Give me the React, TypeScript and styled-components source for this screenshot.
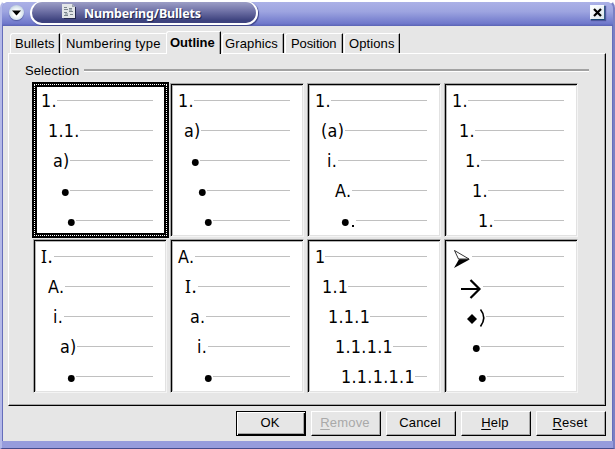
import React from "react";
import styled, { createGlobalStyle } from "styled-components";

const Global = createGlobalStyle`
  * { box-sizing: border-box; }
  body { margin: 0; background: #fff; overflow: hidden; }
`;

const Window = styled.div`
  width: 615px;
  height: 449px;
  display: flex;
  flex-direction: column;
  border-left: 2px solid #b4b9e8;
  border-right: 2px solid #7a80c4;
  border-bottom: 1px solid #454b8c;
  border-radius: 8px 8px 0 0;
  border-top: 2px solid #fff;
  background: #969cdc;
  font-family: "Liberation Sans", Arial, sans-serif;
  font-size: 13px;
  color: #000;
`;

const TitleBar = styled.header`
  height: 24px;
  flex: none;
  display: flex;
  align-items: flex-start;
  background: linear-gradient(#abb1e7, #9da4e0 40%, #6f78cb 90%, #5a63b4);
  border-radius: 7px 7px 0 0;
  padding: 0 8px 0 7px;
`;

const MenuButton = styled.button`
  width: 15px;
  height: 15px;
  margin: 3px 7px 0 0;
  padding: 0;
  border: 0;
  border-radius: 50%;
  background: radial-gradient(circle at 50% 55%, #fff 25%, #d5e2ec 60%, #8ea1c4);
  box-shadow: 0 1px 1px #515aa0;
  svg { display: block; }
`;

const TitlePill = styled.div`
  width: 228px;
  height: 24px;
  margin: -1px 0 0 -1px;
  display: flex;
  align-items: flex-start;
  gap: 7px;
  padding: 2px 0 0 29px;
  border: 2px solid #fff;
  border-top-width: 1px;
  border-radius: 12px;
  background: linear-gradient(#9c9ec6, #7375a9 40%, #3d427e 88%);
  box-shadow: 1px 1px 1px #3b4284;
  svg { flex: none; }
`;

const Title = styled.h1`
  margin: 0;
  color: #fff;
  font: bold 12.5px/20px "Noto Sans", "DejaVu Sans", sans-serif;
  letter-spacing: -0.15px;
  white-space: nowrap;
  text-shadow: 1px 1px 0 #22264e;
`;

const CloseButton = styled.button`
  width: 15px;
  height: 15px;
  margin: 3px 0 0 auto;
  padding: 0;
  border: 1px solid #f5faff;
  border-right-color: #335c85;
  border-bottom-color: #174774;
  background: linear-gradient(135deg, #fff, #dbe6ec);
  box-shadow: 1px 1px 1px #4c559c;
  svg { display: block; }
`;

const Body = styled.main`
  flex: none;
  height: 415px;
  margin: 0;
  padding: 5px 5px 0 5px;
  background: #e6e6e6;
  border-left: 1px solid #656dbb;
  border-right: 1px solid #656dbb;
`;

const Tabs = styled.nav`
  display: flex;
  align-items: flex-end;
  height: 22px;
  padding-left: 2px;
`;

const Tab = styled.div<{ $w: number; $gap?: number; $pad: number; $active?: boolean; $covered?: boolean; $track: number }>`
  width: ${p => p.$w}px;
  height: ${p => (p.$active ? 23 : 20)}px;
  margin-right: ${p => p.$gap ?? 0}px;
  margin-bottom: ${p => (p.$active ? -1 : 0)}px;
  padding-left: ${p => p.$pad}px;
  position: relative;
  z-index: ${p => (p.$active ? 1 : 0)};
  background: #e6e6e6;
  border-left: 1px solid #fff;
  border-top: 1px solid #fff;
  border-right: ${p => (p.$covered ? "0" : "1px solid #000")};
  box-shadow: ${p => (p.$covered ? "none" : "inset -1px 0 #a6a6a6")};
  border-radius: 3px 1px 0 0;
  font-weight: ${p => (p.$active ? "bold" : "normal")};
  line-height: ${p => (p.$active ? 22 : 20)}px;
  letter-spacing: ${p => p.$track}px;
  white-space: nowrap;
`;

const Pane = styled.section`
  width: 598px;
  height: 353px;
  padding: 8px 16px 0 16px;
  border: 1px solid #fff;
  border-right-color: #000;
  border-bottom-color: #000;
  box-shadow: inset -1px -1px #a6a6a6;
`;

const Legend = styled.div`
  display: flex;
  align-items: center;
  gap: 5px;
  height: 16px;
  line-height: 15px;
  letter-spacing: 0.1px;
  &::after {
    content: "";
    flex: 1;
    height: 2px;
    background: #a2a2a2;
    border-bottom: 1px solid #fff;
  }
`;

const Grid = styled.div`
  display: grid;
  grid-template-columns: repeat(4, 134px);
  grid-auto-rows: 154px;
  gap: 2px 3px;
  margin: 5px 0 0 8px;
`;

const Cell = styled.div<{ $selected?: boolean }>`
  position: relative;
  background: #fff;
  padding: 3px 14px 0 0;
  border: 1px solid #a6a6a6;
  border-right-color: #f4f4f4;
  border-bottom-color: #f4f4f4;
  box-shadow: inset 1px 1px #000, inset -1px -1px #e2e2e2, inset 2px 2px #b4b4b4;
  ${p => p.$selected && `
    &::before {
      content: "";
      position: absolute;
      inset: -2px -3px -2px -2px;
      border: 5px solid #000;
    }
    &::after {
      content: "";
      position: absolute;
      inset: 0 -1px 0 0;
      border: 1px dotted #fff;
    }
  `}
`;

const Level = styled.div<{ $x: number; $end: number }>`
  height: 30px;
  padding-left: ${p => p.$x - 1}px;
  display: grid;
  grid-template-columns: ${p => p.$end - p.$x}px 1fr;
  &::after {
    content: "";
    height: 1px;
    margin-top: 13px;
    margin-right: -1px;
    background: #c0c0c0;
  }
`;

const Marker = styled.span<{ $serif?: boolean }>`
  font-family: ${p => (p.$serif ? '"Noto Sans"' : '"DejaVu Sans Condensed", "DejaVu Sans"')}, sans-serif;
  font-stretch: ${p => (p.$serif ? "normal" : "condensed")};
  font-size: ${p => (p.$serif ? 17.5 : 17.8)}px;
  line-height: ${p => (p.$serif ? 27 : 28)}px;
  height: 28px;
  letter-spacing: ${p => (p.$serif ? 0.7 : 0.3)}px;
  white-space: nowrap;
`;

const Symbol = styled.svg`
  display: block;
  overflow: visible;
`;

const Footer = styled.footer`
  display: flex;
  justify-content: flex-end;
  gap: 5px;
  padding-top: 5px;
  width: 598px;
`;

const Button = styled.button<{ $default?: boolean }>`
  width: 70px;
  height: 25px;
  padding: 0 2px 2px 0;
  background: #e6e6e6;
  border: 1px solid ${p => (p.$default ? "#000" : "#fff")};
  border-right-color: #000;
  border-bottom-color: #000;
  box-shadow: ${p => (p.$default
    ? "inset 1px 1px #fff, inset -1px -1px #000, inset -2px -2px #a6a6a6"
    : "inset -1px -1px #a6a6a6")};
  font: 13px/21px "Liberation Sans", Arial, sans-serif;
  letter-spacing: 0.2px;
  color: #000;
  &:disabled { color: #a9a9a9; }
  u { text-underline-offset: 2px; text-decoration-thickness: 1px; }
`;

type Item = { x: number; end: number; text: string };

/* x: where the marker begins; end: where its rule begins, both from the cell's left edge. */
const cells: Item[][] = [
  [[8, 24, "1."], [15, 47, "1.1."], [20, 37, "a)"], [29, 37, "•"], [35, 43, "•"]],
  [[8, 24, "1."], [14, 31, "a)"], [22, 30, "•"], [29, 37, "•"], [35, 43, "•"]],
  [[8, 24, "1."], [14, 38, "(a)"], [20, 31, "i."], [28, 45, "A."], [35, 49, "•."]],
  [[8, 24, "1."], [15, 31, "1."], [21, 37, "1."], [28, 44, "1."], [34, 50, "1."]],
  [[8, 21, "I."], [15, 32, "A."], [20, 31, "i."], [27, 44, "a)"], [35, 43, "•"]],
  [[8, 25, "A."], [15, 28, "I."], [20, 36, "a."], [27, 38, "i."], [35, 43, "•"]],
  [[8, 18, "1"], [15, 41, "1.1"], [21, 63, "1.1.1"], [28, 86, "1.1.1.1"], [34, 108, "1.1.1.1.1"]],
  [[10, 28, "arrowhead"], [17, 39, "arrow"], [23, 42, "◆)"], [29, 37, "•"], [35, 43, "•"]],
].map(c => c.map(([x, end, text]) => ({ x, end, text }) as Item));

function Mark({ text }: { text: string }) {
  switch (text) {
    case "•":
      return <Symbol width="7" height="28"><circle cx="3.3" cy="15.5" r="3.4" /></Symbol>;
    case "•.":
      return (
        <Symbol width="14" height="28">
          <circle cx="3.3" cy="15.5" r="3.4" />
          <path d="M10 18h2v2h-2z" />
        </Symbol>
      );
    case "arrowhead":
      return (
        <Symbol width="16" height="28">
          <path d="M.5 7.5 15 16 4.5 16z" fill="#fff" stroke="#000" strokeWidth=".8" />
          <path d="M0 25 5 16.2H16z" />
        </Symbol>
      );
    case "arrow":
      return (
        <Symbol width="21" height="28">
          <path d="M0 16H19M9.5 7 18.5 16 9.5 25" fill="none" stroke="#000" strokeWidth="2.2" />
        </Symbol>
      );
    case "◆)":
      return (
        <Symbol width="19" height="28">
          <path d="m5 11 5 5-5 5-5-5z" />
          <path d="M13.5 6.5Q20 14.5 13.5 23.5" fill="none" stroke="#000" strokeWidth="1.6" />
        </Symbol>
      );
    default:
      return <Marker $serif={text === "I."}>{text}</Marker>;
  }
}

export default function App() {
  return (
    <>
      <Global />
      <Window>
        <TitleBar>
          <MenuButton aria-label="Window menu">
            <svg width="15" height="15"><path d="M3 5.5h9L7.5 10.5z" /></svg>
          </MenuButton>
          <TitlePill>
            <svg width="16" height="16">
              <path d="M3 3h12v12H3z" fill="#25294f" />
              <path d="M1 0h10l3 3v11H1z" fill="#e3e6e8" />
              <path d="M11 0v3h3" fill="#9aa3aa" />
              <path d="M3 3.5h3M3 5.5h4M8 4.5h3M3 8.5h3M8 7.5h4M3 11.5h4M9 10.5h3" stroke="#7b858c" />
              <path d="M8 5h3v2H8zM4 9h3v2H4z" fill="#a9b3b9" />
            </svg>
            <Title>Numbering/Bullets</Title>
          </TitlePill>
          <CloseButton aria-label="Close">
            <svg width="13" height="13"><path d="m3 3 7 7M10 3l-7 7" stroke="#000" strokeWidth="2.2" /></svg>
          </CloseButton>
        </TitleBar>
        <Body>
          <Tabs>
            <Tab $w={50} $gap={1} $pad={4} $track={0.1}>Bullets</Tab>
            <Tab $w={105} $pad={4} $covered $track={0.2}>Numbering type</Tab>
            <Tab $w={55} $gap={1} $pad={3} $active $track={0}>Outline</Tab>
            <Tab $w={62} $gap={1} $pad={2} $track={0.12}>Graphics</Tab>
            <Tab $w={58} $gap={1} $pad={5} $track={-0.1}>Position</Tab>
            <Tab $w={56} $pad={4} $track={0.1}>Options</Tab>
          </Tabs>
          <Pane>
            <Legend>Selection</Legend>
            <Grid>
              {cells.map((levels, i) => (
                <Cell key={i} $selected={i === 0}>
                  {levels.map((l, j) => (
                    <Level key={j} $x={l.x} $end={l.end}><Mark text={l.text} /></Level>
                  ))}
                </Cell>
              ))}
            </Grid>
          </Pane>
          <Footer>
            <Button $default>OK</Button>
            <Button disabled><u>R</u>emove</Button>
            <Button>Cancel</Button>
            <Button><u>H</u>elp</Button>
            <Button><u>R</u>eset</Button>
          </Footer>
        </Body>
      </Window>
    </>
  );
}
